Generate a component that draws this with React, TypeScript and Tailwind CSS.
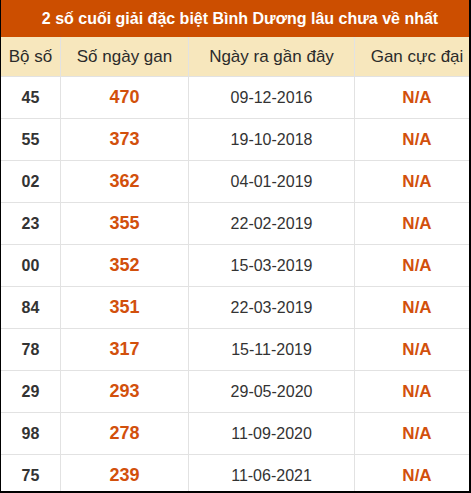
import React from 'react';

interface GanRow {
  boSo: string;
  soNgay: number;
  ngayRa: string;
  ganCucDai: string;
}

const rows: GanRow[] = [
  { boSo: '45', soNgay: 470, ngayRa: '09-12-2016', ganCucDai: 'N/A' },
  { boSo: '55', soNgay: 373, ngayRa: '19-10-2018', ganCucDai: 'N/A' },
  { boSo: '02', soNgay: 362, ngayRa: '04-01-2019', ganCucDai: 'N/A' },
  { boSo: '23', soNgay: 355, ngayRa: '22-02-2019', ganCucDai: 'N/A' },
  { boSo: '00', soNgay: 352, ngayRa: '15-03-2019', ganCucDai: 'N/A' },
  { boSo: '84', soNgay: 351, ngayRa: '22-03-2019', ganCucDai: 'N/A' },
  { boSo: '78', soNgay: 317, ngayRa: '15-11-2019', ganCucDai: 'N/A' },
  { boSo: '29', soNgay: 293, ngayRa: '29-05-2020', ganCucDai: 'N/A' },
  { boSo: '98', soNgay: 278, ngayRa: '11-09-2020', ganCucDai: 'N/A' },
  { boSo: '75', soNgay: 239, ngayRa: '11-06-2021', ganCucDai: 'N/A' },
];

const cols = 'grid grid-cols-[60px_128px_166px_1fr]';

export default function App() {
  return (
    <div
      className="w-[471px] h-[493px] overflow-hidden bg-white border-l border-r-2 border-b-2 border-black text-[#333]"
      style={{ fontFamily: '"Liberation Sans", Arial, sans-serif' }}
    >
      {/* table is wider than the frame; right edge is cut off */}
      <div className="w-[478px] shrink-0">
        {/* Title bar */}
        <div className="h-[37px] flex items-center justify-center bg-[#cc4e00] text-white font-bold text-[16px]">
          2 số cuối giải đặc biệt Bình Dương lâu chưa về nhất
        </div>

        {/* Column headers */}
        <div className={`${cols} h-[40px] bg-[#f7e7bd] border-b border-[#e2e2e2] text-[17px] text-[#2b2b2b]`}>
          <div className="flex items-center justify-center border-r border-[#e2e2e2]">Bộ số</div>
          <div className="flex items-center justify-center border-r border-[#e2e2e2]">Số ngày gan</div>
          <div className="flex items-center justify-center border-r border-[#e2e2e2]">Ngày ra gần đây</div>
          <div className="flex items-center justify-center">Gan cực đại</div>
        </div>

        {/* Data rows */}
        {rows.map((row) => (
          <div key={row.boSo} className={`${cols} h-[42px] border-b border-[#e2e2e2]`}>
            <div className="flex items-center justify-center border-r border-[#e2e2e2] font-bold text-[16px]">
              {row.boSo}
            </div>
            <div className="flex items-center justify-center border-r border-[#e2e2e2] font-bold text-[18px] text-[#d2500c]">
              {row.soNgay}
            </div>
            <div className="flex items-center justify-center border-r border-[#e2e2e2] text-[16px]">
              {row.ngayRa}
            </div>
            <div className="flex items-center justify-center font-bold text-[17px] text-[#d2500c]">
              {row.ganCucDai}
            </div>
          </div>
        ))}
      </div>
    </div>
  );
}
